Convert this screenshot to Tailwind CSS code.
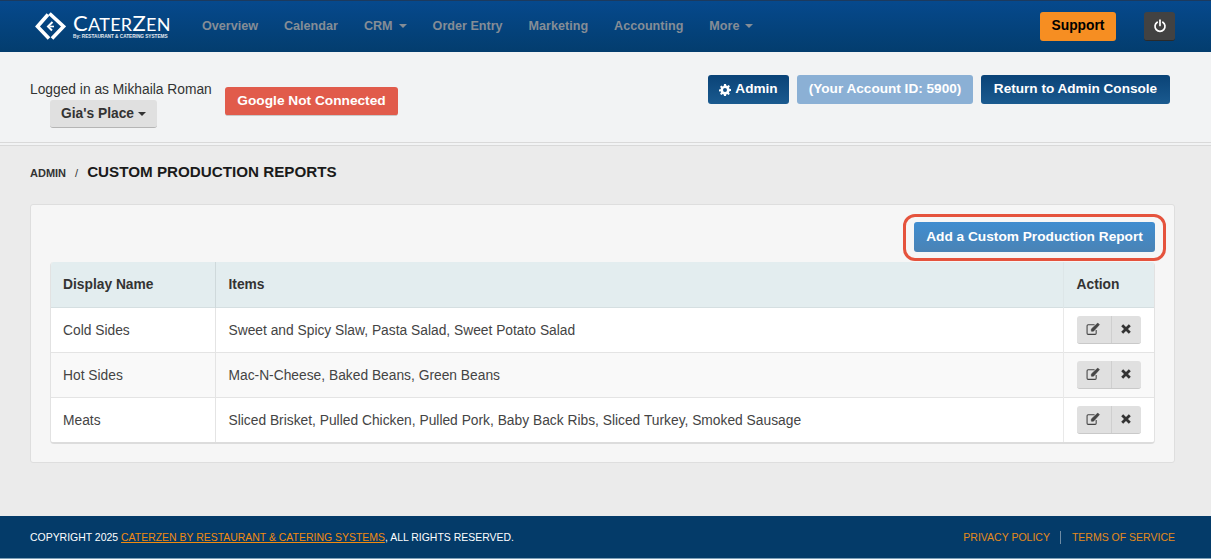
<!DOCTYPE html>
<html lang="en">
<head>
<meta charset="utf-8">
<title>Custom Production Reports</title>
<script src="https://cdn.jsdelivr.net/npm/@tailwindcss/browser@4"></script>
</head>
<body class="bg-[#ebebeb] font-['Liberation_Sans',Arial,sans-serif] text-[13.8px] text-[#333]">
<div class="flex flex-col h-[559px] w-[1211px] overflow-hidden relative">
  <header class="h-[52px] shrink-0 flex items-center border-t border-[#1c3a5e] bg-gradient-to-b from-[#06498d] to-[#033d6e] pl-[35px] pr-[36px] pb-[1px]">
    <div class="flex items-center w-[167px] shrink-0">
      <svg width="31" height="31" viewBox="0 0 31 31" class="shrink-0" fill="none" stroke="#fff">
        <path d="M13 3.5 L2.5 15.5 L14 27.5" stroke-width="3.6"/>
        <path d="M14.5 2.5 L28.5 15.5 L17 27.5" stroke-width="3.6"/>
        <path d="M17.5 11 L13 15.5 L17 19.5" stroke-width="2"/>
        <path d="M14.5 15.5 H19" stroke-width="1.6"/>
      </svg>
      <div class="ml-[7px] flex flex-col text-white font-['Lato',sans-serif] mt-[1px]">
        <div class="leading-[20px] h-[20px] text-[22px] tracking-[0.3px] whitespace-nowrap">C<span class="text-[18px]">ATER</span>Z<span class="text-[18px]">EN</span></div>
        <div class="leading-[7px] h-[7px] text-[4.7px] font-bold text-white/90 font-['Liberation_Sans',sans-serif] whitespace-nowrap">By: RESTAURANT &amp; CATERING SYSTEMS</div>
      </div>
    </div>
    <nav class="flex items-center gap-[26px] text-[12.6px] font-bold text-[#858d96] whitespace-nowrap">
      <a>Overview</a><a>Calendar</a>
      <a class="flex items-center gap-[6px]">CRM <span class="w-0 h-0 border-x-[4px] border-x-transparent border-t-[4px] border-t-[#858d96]"></span></a>
      <a>Order Entry</a><a>Marketing</a><a>Accounting</a>
      <a class="flex items-center gap-[6px]">More <span class="w-0 h-0 border-x-[4px] border-x-transparent border-t-[4px] border-t-[#858d96]"></span></a>
    </nav>
    <div class="ml-auto flex items-center gap-[28px]">
      <a class="h-[29px] w-[76px] flex items-center justify-center rounded-[3px] bg-[#f68e22] text-black font-bold">Support</a>
      <a class="h-[29px] w-[31px] flex items-center justify-center rounded-[3px] bg-[#424242] border-b border-[#2a2a2a]">
        <svg width="14" height="14" viewBox="0 0 14 14" fill="none" stroke="#fff" stroke-width="1.7" stroke-linecap="round"><path d="M4.2 3.2 A5 5 0 1 0 9.8 3.2"/><path d="M7 1.2 V6.5"/></svg>
      </a>
    </div>
  </header>

  <section class="h-[94px] shrink-0 bg-[#f2f3f4] border-b-[4px] border-double border-[#d9d9d9] pl-[30px] pr-[41px] flex items-start">
    <div class="mt-[29px] flex flex-col items-start w-[181px]">
      <div class="leading-[17px] text-[#333] whitespace-nowrap">Logged in as Mikhaila Roman</div>
      <a class="ml-[20px] mt-[2px] h-[28px] w-[107px] pt-[1px] flex items-center justify-center gap-[4px] rounded-[3px] bg-[#e0e0e0] border-b border-[#b5b5b5] font-bold text-[#333]">Gia's Place <span class="w-0 h-0 border-x-[4px] border-x-transparent border-t-[4px] border-t-[#333]"></span></a>
    </div>
    <a class="ml-[14px] mt-[35px] h-[29px] w-[173px] pt-[1px] flex items-center justify-center rounded-[3px] bg-[#e15b4b] border-b border-[#c9c9c9] text-white font-bold whitespace-nowrap text-[13.7px]">Google Not Connected</a>
    <div class="ml-auto mt-[23px] flex items-center gap-[8px] text-white font-bold whitespace-nowrap text-[13.6px]">
      <a class="h-[29px] w-[81px] flex items-center justify-center gap-[4px] rounded-[3px] bg-gradient-to-b from-[#0a4377] to-[#1a5a8f]">
        <svg width="12" height="12" viewBox="0 0 12 12" fill="#fff"><path fill-rule="evenodd" d="M5 0h2l.3 1.6 1 .4L9.7 1.1l1.2 1.2-.9 1.4.4 1 1.6.3v2l-1.6.3-.4 1-.1.1.9 1.3-1.2 1.2-1.4-.9-1 .4L7 12H5l-.3-1.6-1-.4-1.4.9-1.2-1.2.9-1.4-.4-1L0 7.5v-2l1.6-.3.4-1-.9-1.4 1.2-1.2 1.4.9 1-.4zM6 4a2 2 0 1 0 0 4 2 2 0 0 0 0-4z"/></svg>
        Admin</a>
      <a class="h-[29px] w-[176px] flex items-center justify-center rounded-[3px] bg-[#8bb0d5]">(Your Account ID: 5900)</a>
      <a class="h-[29px] w-[189px] flex items-center justify-center rounded-[3px] bg-gradient-to-b from-[#0a4377] to-[#1a5a8f]">Return to Admin Console</a>
    </div>
  </section>

  <main class="flex-1 pl-[30px] pr-[36px] pt-[16px]">
    <div class="flex items-baseline h-[24px] leading-[20px] whitespace-nowrap">
      <span class="text-[11px] font-bold text-[#333]">ADMIN</span>
      <span class="mx-[9px] text-[11px] text-[#333]">/</span>
      <h1 class="text-[15.2px] font-bold text-[#1a1a1a]">CUSTOM PRODUCTION REPORTS</h1>
    </div>
    <div class="mt-[18px] h-[259px] bg-[#f6f6f6] border border-[#dedede] rounded-[3px] px-[19px] pt-[17px]">
      <div class="flex justify-end h-[40px]">
        <a class="h-[30px] w-[241px] pt-[1px] flex items-center justify-center rounded-[3px] bg-gradient-to-b from-[#3f8dd0] to-[#4a83b5] text-white font-bold whitespace-nowrap text-[13.7px]">Add a Custom Production Report</a>
      </div>
      <div class="rounded-[4px] border border-t-0 border-[#e2e2e2] border-b-2 border-b-[#dcdcdc] overflow-hidden">
        <table class="w-full table-fixed border-collapse">
          <colgroup><col class="w-[164px]"><col><col class="w-[91px]"></colgroup>
          <thead>
            <tr class="h-[45px] bg-[#e3edef] text-left font-bold text-[#333] border-b border-[#d5dfe1]">
              <th class="pl-[12px] pt-[2px] font-bold">Display Name</th>
              <th class="pl-[13px] pt-[2px] font-bold border-l border-[#cfd9db]">Items</th>
              <th class="pl-[13px] pt-[2px] font-bold border-l border-[#dde6e8]">Action</th>
            </tr>
          </thead>
          <tbody class="text-[#444]">
            <tr class="h-[45px] bg-white border-b border-[#e4e4e4]">
              <td class="pl-[12px] pt-[3px]">Cold Sides</td>
              <td class="pl-[13px] pt-[3px] border-l border-[#e4e4e4]">Sweet and Spicy Slaw, Pasta Salad, Sweet Potato Salad</td>
              <td class="pl-[13px] border-l border-[#e9e9e9]">
                <div class="flex w-[64px] h-[28px] rounded-[3px] bg-[#e0e0e0] border-b border-[#c9c9c9]">
                  <span class="w-[35px] flex items-center justify-center border-r border-[#cfcfcf]"><svg width="15" height="14" viewBox="0 0 14 13" fill="none" stroke="#444"><path d="M9.5 7.5 V10.5 Q9.5 11.5 8.5 11.5 H2 Q1 11.5 1 10.5 V3.5 Q1 2.5 2 2.5 H8"/><path d="M5 6.5 L5 8.5 L7 8.5 L12.5 2.5 L11 1 Z" fill="#444" stroke-width=".6"/></svg></span>
                  <span class="flex-1 flex items-center justify-center"><svg width="10" height="10" viewBox="0 0 10 10" stroke="#333" stroke-width="2.8"><path d="M1.2 1.2 L8.8 8.8 M8.8 1.2 L1.2 8.8"/></svg></span>
                </div>
              </td>
            </tr>
            <tr class="h-[45px] bg-[#f9f9f9] border-b border-[#e4e4e4]">
              <td class="pl-[12px] pt-[3px]">Hot Sides</td>
              <td class="pl-[13px] pt-[3px] border-l border-[#e4e4e4]">Mac-N-Cheese, Baked Beans, Green Beans</td>
              <td class="pl-[13px] border-l border-[#e9e9e9]">
                <div class="flex w-[64px] h-[28px] rounded-[3px] bg-[#e0e0e0] border-b border-[#c9c9c9]">
                  <span class="w-[35px] flex items-center justify-center border-r border-[#cfcfcf]"><svg width="15" height="14" viewBox="0 0 14 13" fill="none" stroke="#444"><path d="M9.5 7.5 V10.5 Q9.5 11.5 8.5 11.5 H2 Q1 11.5 1 10.5 V3.5 Q1 2.5 2 2.5 H8"/><path d="M5 6.5 L5 8.5 L7 8.5 L12.5 2.5 L11 1 Z" fill="#444" stroke-width=".6"/></svg></span>
                  <span class="flex-1 flex items-center justify-center"><svg width="10" height="10" viewBox="0 0 10 10" stroke="#333" stroke-width="2.8"><path d="M1.2 1.2 L8.8 8.8 M8.8 1.2 L1.2 8.8"/></svg></span>
                </div>
              </td>
            </tr>
            <tr class="h-[45px] bg-white">
              <td class="pl-[12px] pt-[3px]">Meats</td>
              <td class="pl-[13px] pt-[3px] border-l border-[#e4e4e4]">Sliced Brisket, Pulled Chicken, Pulled Pork, Baby Back Ribs, Sliced Turkey, Smoked Sausage</td>
              <td class="pl-[13px] border-l border-[#e9e9e9]">
                <div class="flex w-[64px] h-[28px] rounded-[3px] bg-[#e0e0e0] border-b border-[#c9c9c9]">
                  <span class="w-[35px] flex items-center justify-center border-r border-[#cfcfcf]"><svg width="15" height="14" viewBox="0 0 14 13" fill="none" stroke="#444"><path d="M9.5 7.5 V10.5 Q9.5 11.5 8.5 11.5 H2 Q1 11.5 1 10.5 V3.5 Q1 2.5 2 2.5 H8"/><path d="M5 6.5 L5 8.5 L7 8.5 L12.5 2.5 L11 1 Z" fill="#444" stroke-width=".6"/></svg></span>
                  <span class="flex-1 flex items-center justify-center"><svg width="10" height="10" viewBox="0 0 10 10" stroke="#333" stroke-width="2.8"><path d="M1.2 1.2 L8.8 8.8 M8.8 1.2 L1.2 8.8"/></svg></span>
                </div>
              </td>
            </tr>
          </tbody>
        </table>
      </div>
    </div>
  </main>

  <footer class="h-[43px] shrink-0 bg-[#043b69] border-b border-[#7ea0b8] pl-[30px] pr-[36px] pt-[1px] flex items-center text-[10.5px] text-white whitespace-nowrap">
    <div class="text-[10.46px]">COPYRIGHT 2025 <a class="text-[#f18a0f] underline">CATERZEN BY RESTAURANT &amp; CATERING SYSTEMS</a>, ALL RIGHTS RESERVED.</div>
    <div class="ml-auto flex items-center text-[#e58a1a]">
      <a>PRIVACY POLICY</a>
      <span class="mx-[10.5px] h-[13px] w-px bg-[#6f8ca5]"></span>
      <a>TERMS OF SERVICE</a>
    </div>
  </footer>

  <div class="absolute left-[903px] top-[214px] w-[263px] h-[47px] rounded-[12px] border-[3px] border-[#e5533d]"></div>
</div>
</body>
</html>
